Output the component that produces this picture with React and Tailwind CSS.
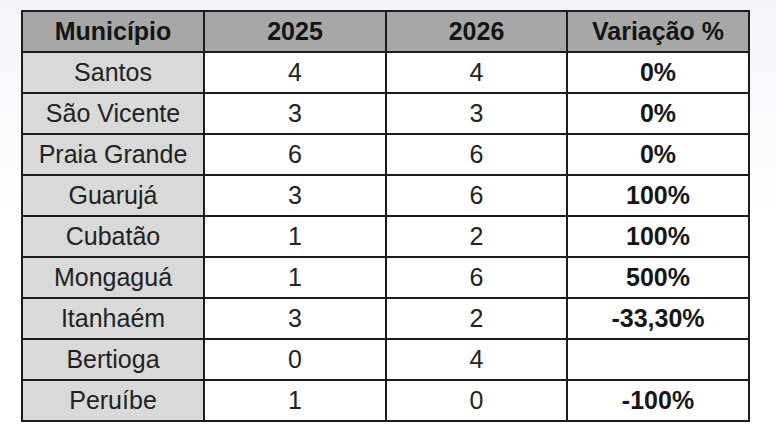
const ROWS = [
  { city: "Santos",       y25: "4", y26: "4", varp: "0%" },
  { city: "São Vicente",  y25: "3", y26: "3", varp: "0%" },
  { city: "Praia Grande", y25: "6", y26: "6", varp: "0%" },
  { city: "Guarujá",      y25: "3", y26: "6", varp: "100%" },
  { city: "Cubatão",      y25: "1", y26: "2", varp: "100%" },
  { city: "Mongaguá",     y25: "1", y26: "6", varp: "500%" },
  { city: "Itanhaém",     y25: "3", y26: "2", varp: "-33,30%" },
  { city: "Bertioga",     y25: "0", y26: "4", varp: "" },
  { city: "Peruíbe",      y25: "1", y26: "0", varp: "-100%" },
];

const HEAD = ["Município", "2025", "2026", "Variação %"];

export default function App() {
  return (
    <div
      className="w-[776px] h-[435px] bg-linear-to-b from-[#f3f5fa] via-white to-white pt-[10px] pl-[21px]"
      style={{ fontFamily: '"Liberation Sans", Arial, sans-serif' }}
    >
      <div className="grid grid-cols-[182px_182px_181px_182px] w-fit border-l-2 border-t-2 border-[#1c1c1c] text-[25px] text-[#222]">
        {/* Header */}
        {HEAD.map((h) => (
          <div
            key={h}
            className="h-[41px] flex items-center justify-center bg-[#a7a7a7] border-r-2 border-b-2 border-[#1c1c1c] font-bold text-[#141414]"
          >
            {h}
          </div>
        ))}

        {/* Body rows */}
        {ROWS.map((r) => (
          <div key={r.city} className="contents">
            <div className="h-[41px] flex items-center justify-center bg-[#d9d9d9] border-r-2 border-b-2 border-[#1c1c1c]">
              {r.city}
            </div>
            <div className="h-[41px] flex items-center justify-center bg-white border-r-2 border-b-2 border-[#1c1c1c]">
              {r.y25}
            </div>
            <div className="h-[41px] flex items-center justify-center bg-white border-r-2 border-b-2 border-[#1c1c1c]">
              {r.y26}
            </div>
            <div className="h-[41px] flex items-center justify-center bg-white border-r-2 border-b-2 border-[#1c1c1c] font-bold text-[#161616]">
              {r.varp}
            </div>
          </div>
        ))}
      </div>
    </div>
  );
}
